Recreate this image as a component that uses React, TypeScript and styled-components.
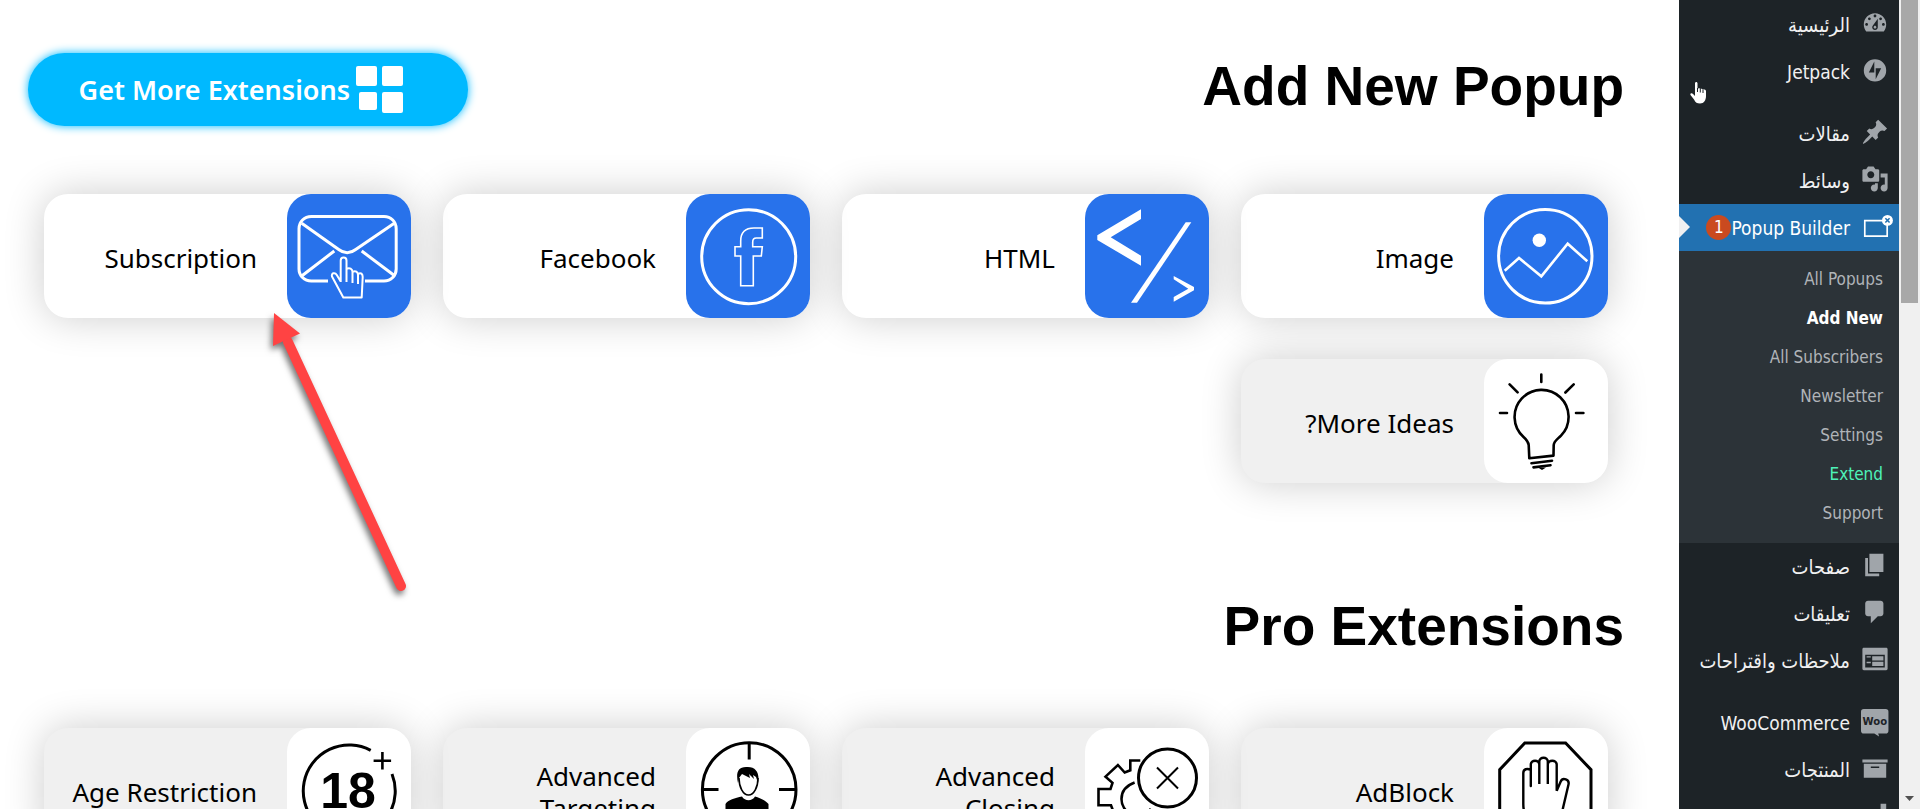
import React from 'react';
import styled, { createGlobalStyle, css } from 'styled-components';

const GlobalStyle = createGlobalStyle`
  *, *::before, *::after { box-sizing: border-box; }
  html, body { margin: 0; padding: 0; background: #fff; }
  ul { list-style: none; margin: 0; padding: 0; }
  a { text-decoration: none; color: inherit; }
`;

const Shell = styled.div`
  position: relative;
  display: flex;
  height: 100vh;
  overflow: hidden;
  background: #fff;
  color: #000;
`;

/* ---------- scroll rail ---------- */

const Rail = styled.div`
  position: relative;
  flex: 0 0 21px;
  padding: 0 2px;
  background: #f0f0f0;
`;

const Thumb = styled.div`
  height: 303px;
  background: #a8a8a8;
`;

const RailArrow = styled.svg`
  position: absolute;
  bottom: 8px;
  left: 6px;
  width: 9px;
  height: 5px;
  fill: #505050;
`;

/* ---------- admin menu ---------- */

const Sidebar = styled.nav`
  flex: 0 0 220px;
  padding-top: 1px;
  overflow: hidden;
  background: #1d2327;
  color: #f0f0f1;
  font-family: 'DejaVu Sans Condensed', 'Noto Sans', sans-serif;
  font-size: 19px;
`;

const MenuItem = styled.li<{ $spaced?: boolean }>`
  margin-top: ${(p) => (p.$spaced ? 15 : 0)}px;
`;

const MenuLink = styled.a<{ $current?: boolean }>`
  position: relative;
  display: flex;
  align-items: center;
  height: 47px;
  line-height: 26px;
  white-space: nowrap;
  &:lang(ar) {
    font-size: 20px;
  }
  ${(p) =>
    p.$current &&
    css`
      background: #2271b1;
      color: #fff;
      &::after {
        content: '';
        position: absolute;
        left: 0;
        top: 12px;
        border: 11px solid transparent;
        border-right-width: 0;
        border-left-color: #f0f0f1;
      }
    `}
`;

const MenuIcon = styled.svg`
  flex: none;
  align-self: flex-start;
  width: 28px;
  height: 28px;
  margin: 8px 10px 0 11px;
  fill: #a0a5aa;
  overflow: visible;
`;

const Badge = styled.span`
  width: 25px;
  height: 25px;
  border-radius: 50%;
  background: #ca4a1f;
  color: #fff;
  font-size: 17px;
  line-height: 25px;
  text-align: center;
`;

const SubMenu = styled.ul`
  padding: 9px 0 10px;
  background: #2c3338;
  font-size: 17px;
`;

const SubLink = styled.a<{ $tone?: 'current' | 'extend' }>`
  display: block;
  height: 39px;
  padding: 0 16px;
  line-height: 38px;
  color: ${(p) => (p.$tone === 'current' ? '#fff' : p.$tone === 'extend' ? '#4ef2b8' : '#b0b4b8')};
  font-weight: ${(p) => (p.$tone === 'current' ? 700 : 400)};
`;

/* ---------- content ---------- */

const Content = styled.main`
  flex: 1;
  min-width: 0;
  padding-top: 53px;
`;

const Header = styled.header`
  display: flex;
  justify-content: space-between;
  align-items: flex-start;
  padding: 0 55px 0 28px;
  margin-bottom: 68px;
`;

const Title = styled.h2`
  margin: 0;
  font: 700 55px/66px 'Liberation Sans', Arial, sans-serif;
`;

const SectionTitle = styled(Title)`
  margin: 110px 55px 69px 0;
`;

const ExtensionsButton = styled.button`
  display: flex;
  align-items: center;
  gap: 6px;
  width: 440px;
  height: 73px;
  padding: 0 65px 0 0;
  border: 0;
  border-radius: 37px;
  background: #00b9ff;
  box-shadow: 0 0 10px #00b9ff;
  color: #fff;
  font: 600 27px/40px 'Noto Sans', sans-serif;
  white-space: nowrap;
  svg {
    flex: none;
    width: 47px;
    height: 47px;
    fill: #fff;
  }
`;

const Grid = styled.div`
  display: grid;
  grid-template-columns: repeat(4, 1fr);
  gap: 41px 32px;
  padding: 0 71px 0 44px;
`;

const Card = styled.a<{ $muted?: boolean }>`
  display: flex;
  align-items: center;
  height: 124px;
  border-radius: 24px;
  background: ${(p) => (p.$muted ? '#f0f0f0' : '#fff')};
  box-shadow: 0 0 40px rgba(0, 0, 0, 0.2);
`;

const Tile = styled.svg<{ $muted?: boolean }>`
  flex: none;
  width: 124px;
  height: 124px;
  border-radius: 24px;
  background: ${(p) => (p.$muted ? '#fff' : '#2872eb')};
  color: ${(p) => (p.$muted ? '#000' : '#fff')};
  fill: none;
  stroke: currentColor;
  stroke-width: 3;
`;

const CardLabel = styled.span`
  flex: 1;
  padding: 3px 30px 0 24px;
  font: 400 26px/32px 'Noto Sans', sans-serif;
`;

/* ---------- overlays ---------- */

const Pointer = styled.svg`
  position: absolute;
  left: 264px;
  top: 304px;
  width: 150px;
  height: 300px;
  overflow: visible;
  filter: drop-shadow(-2px 4px 3px rgba(0, 0, 0, 0.55));
`;

const HandCursor = styled.svg`
  position: absolute;
  right: 213px;
  top: 82px;
  width: 17px;
  height: 22px;
`;

/* ---------- drawings ---------- */

const tiles: Record<string, React.ReactNode> = {
  image: (
    <>
      <circle cx="61.3" cy="62.3" r="46.7" />
      <circle cx="55.3" cy="46.3" r="6.7" fill="currentColor" stroke="none" />
      <path d="M20.7 76.7 35 64l22.3 18.3 26.4-32.6 19.6 17.6" strokeWidth="2.6" />
    </>
  ),
  html: (
    <g fill="currentColor" stroke="none">
      <path d="M56 15.3V25L25.7 43.3 56 61.7v10L12.3 46v-4.7z" />
      <path d="M100.7 28.3h5.6L52 108.7h-6z" />
      <path d="M88.7 82 109 93v3.3l-20.3 11.4V103l14.6-8.3-14.6-9.4z" />
    </g>
  ),
  facebook: (
    <>
      <circle cx="62.7" cy="62.7" r="47" />
      <path
        strokeWidth="1.6"
        d="M76.3 34H68c-9 0-13.3 5-13.3 13v5.7H49V62h5.7v29.7h12.6V62h8l1-9.3h-9.6V48c0-3 1-4 3.6-4h6z"
      />
    </>
  ),
  subscription: (
    <>
      <path d="M41 87H24.3c-7 0-12.3-5.3-12.3-12V34.700c0-7 5.300-12.200 12.300-12.200H97c7 0 12.200 5.200 12.200 12.200V75c0 6.700-5.200 12-12.200 12H78" />
      <path d="m14.7 29.300 37 26.200c6 4.600 11 4.600 17 0l38.600-26.200M14.700 82l32.600-25M74.700 57l32.600 24.500" />
      <path
        strokeWidth="2"
        strokeLinejoin="round"
        d="M53.700 88V66.500c0-4 5.800-4 5.800 0V88M59.500 75c3-2 6 0 6 3v11M65.500 78c3-2 5.500 0 5.500 3v9M71 80c3-2 4.700 0 4.700 3l-1 20.400H56.300L45 82.500c-1-3.500 3-4.500 4.800-1.500l3.900 6.500"
      />
    </>
  ),
  bulb: (
    <>
      <path
        strokeLinejoin="round"
        strokeWidth="2.600"
        d="M45.300 99.300 44.700 86c-.3-3.500-2.500-5.700-5.400-8.300A27 27 0 1 1 77 76.600c-4 4-7 5.600-7.300 9.400l-.2 10.600z"
      />
      <path
        strokeLinecap="round"
        strokeWidth="2.600"
        d="m47.500 104.300 20.500-2.600M49.500 108.400l17-2.200M57.300 15.500v7.500M25.600 25.300l8 8M89.700 25.300l-8.300 8.200M16 54h7M92 54h7.400"
      />
      <path d="M54 108.500h8l-4 2.500z" fill="currentColor" stroke="none" />
    </>
  ),
  adblock: (
    <>
      <path d="M40.800 15h40.800L107 41.700v41l-25.400 26H40.800L15.700 82.700v-41z" />
      <path
        strokeWidth="2.400"
        strokeLinecap="round"
        d="M46.800 58V36.500c0-5 8.500-5 8.500 0V56V33.500c0-5 8.500-5 8.500 0V56V36.500c0-5 8.900-5 8.900 0v26.300l4-9.300c2-4.500 9-2 7.800 3L79 80c-2 11-9 16-19 16-14 0-20.700-7-20.700-20V45c0-4 4-5 7.500-3"
      />
    </>
  ),
  closing: (
    <g transform="translate(2 0)">
      <circle cx="80.500" cy="50" r="29" />
      <path d="m70 39.500 21 21M91 39.500l-21 21" strokeWidth="2" />
      <path
        strokeWidth="2.600"
        d="M53.300 32.500h-10v9.800L37.700 44.500l-6.800-7.500-12.400 11.600 7 6.200-2 6.200h-12v16.300H24l3 8-8 8 12 12 8-7"
      />
      <path strokeWidth="2.600" d="M47.600 54.500C38 58 34.500 64 34.500 71c0 5 2 9 5 12M62 81l4 3" />
    </g>
  ),
  targeting: (
    <g transform="translate(1 0)">
      <circle cx="62.200" cy="61.500" r="46.800" />
      <path d="M62.200 15v16.500M14 61.500h17.500M92 61.500h17.500" />
      <path d="M52 50c0 9 4 17 9.500 17S71 59 71 50" strokeWidth="1.600" />
      <path
        fill="currentColor"
        stroke="none"
        d="M51 55c-2-9-1-16 8-16 10-1 14 6 12 16l-2-6-3-2 1 4-5-5 1 4-8-4-3 4zM55 68.500c3 5 10 5 13 0 6 2 11 4 13.500 7.500V100h-43V76c2.500-4 9.500-6 16.500-7.500z"
      />
    </g>
  ),
  age: (
    <>
      <path d="M83.700 22.300A46 46 0 1 0 105 46" />
      <path d="M95.400 24v17.500M86.600 32.700h17.500" strokeWidth="2.600" />
      <text
        x="61"
        y="80"
        textAnchor="middle"
        fill="currentColor"
        stroke="none"
        fontFamily="'Liberation Sans', sans-serif"
        fontWeight="700"
        fontSize="50"
        direction="ltr"
      >
        18
      </text>
    </>
  ),
};

const glyphs: Record<string, React.ReactNode> = {
  dashboard: (
    <path
      fillRule="evenodd"
      d="M3.760 16h12.480c1.100-1.370 1.760-3.110 1.760-5 0-4.420-3.580-8-8-8s-8 3.580-8 8c0 1.890.66 3.630 1.760 5zM10 4c.55 0 1 .45 1 1s-.45 1-1 1-1-.45-1-1 .45-1 1-1zM6 6c.55 0 1 .45 1 1s-.45 1-1 1-1-.45-1-1 .45-1 1-1zm8 0c.55 0 1 .45 1 1s-.45 1-1 1-1-.45-1-1 .45-1 1-1zm-5.370 5.550L12 7v6c0 1.100-.9 2-2 2s-2-.9-2-2c0-.57.240-1.080.630-1.450zM4 10c.55 0 1 .45 1 1s-.45 1-1 1-1-.45-1-1 .45-1 1-1zm12 0c.55 0 1 .45 1 1s-.45 1-1 1-1-.45-1-1 .45-1 1-1zM10 12c.5 0 1 .5 1 1s-.5 1-1 1-1-.5-1-1 .5-1 1-1z"
    />
  ),
  jetpack: (
    <path
      fillRule="evenodd"
      d="M10 2.300a8 8 0 1 0 0 16 8 8 0 0 0 0-16zM9.500 11.800H5.600L9.500 4zM10.500 16.600V8.800h3.900z"
    />
  ),
  pin: (
    <path d="M10.440 3.020l1.820-1.820 6.360 6.350-1.830 1.820c-1.050-.68-2.480-.57-3.410.36l-.75.75c-.92.93-1.040 2.350-.35 3.410l-1.830 1.820-2.410-2.410-2.800 2.790c-.42.42-3.380 2.710-3.800 2.290s1.860-3.390 2.280-3.810l2.790-2.790L4.100 9.360l1.830-1.820c1.050.69 2.480.57 3.400-.36l.75-.75c.93-.92 1.050-2.350.36-3.410z" />
  ),
  media: (
    <path d="M13 11V4c0-.55-.45-1-1-1h-1.670L9 1H5L3.670 3H2c-.55 0-1 .45-1 1v7c0 .55.45 1 1 1h10c.55 0 1-.45 1-1zM7 4.500c1.380 0 2.500 1.120 2.500 2.500S8.380 9.500 7 9.500 4.500 8.380 4.500 7 5.620 4.500 7 4.500zM14 6h5v10.500c0 1.380-1.120 2.500-2.500 2.500S14 17.880 14 16.500s1.120-2.500 2.500-2.500c.17 0 .34.020.5.050V9h-3V6zm-4 8.050V13h2v3.500c0 1.380-1.120 2.500-2.500 2.500S7 17.880 7 16.500 8.120 14 9.500 14c.17 0 .34.020.5.050z" />
  ),
  popup: (
    <>
      <path d="M2.700 6.200h16v11h-16z" fill="none" stroke="#fff" strokeWidth="1.200" />
      <circle cx="18.900" cy="6" r="3.900" fill="#fff" />
      <path d="m17.400 4.500 3 3M20.400 4.500l-3 3" stroke="#2271b1" strokeWidth="1.100" />
    </>
  ),
  pages: <path d="M6 15V2h10v13H6zm-1 1h8v2H3V5h2v11z" />,
  comments: (
    <path d="M5 2h9c1.100 0 2 .9 2 2v7c0 1.100-.9 2-2 2h-2l-5 5v-5H5c-1.100 0-2-.9-2-2V4c0-1.100.9-2 2-2z" />
  ),
  feedback: (
    <path
      fillRule="evenodd"
      d="M2 2h16c.55 0 1 .45 1 1v14c0 .55-.45 1-1 1H2c-.55 0-1-.45-1-1V3c0-.55.45-1 1-1zm15 14V7H3v9h14zM4 8v1h3V8H4zm4 0v3h8V8H8zm-4 4v1h3v-1H4zm4 0v3h8v-3H8z"
    />
  ),
  woo: (
    <>
      <path d="M2 1.400h15.600a2 2 0 0 1 2 2v13.500a2 2 0 0 1-2 2h-5.300l.6 2.100-3.400-2.100H2a2 2 0 0 1-2-2V3.400a2 2 0 0 1 2-2z" />
      <text
        x="9.900"
        y="13.200"
        textAnchor="middle"
        direction="ltr"
        fill="#1d2327"
        fontFamily="'DejaVu Sans Condensed', sans-serif"
        fontWeight="700"
        fontSize="8"
      >
        Woo
      </text>
    </>
  ),
  archive: <path fillRule="evenodd" d="M19 4v2H1V4h18zM2 7h16v10H2V7zm11 3V9H7v1h6z" />,
  chart: <path d="M18 18V2h-4v16h4zm-6 0V7H8v11h4zm-6 0v-8H2v8h4z" />,
};

interface Entry {
  label: string;
  icon: string;
  lang?: string;
  spaced?: boolean;
  current?: boolean;
}

const menu: Entry[] = [
  { label: 'الرئيسية', icon: 'dashboard', lang: 'ar' },
  { label: 'Jetpack', icon: 'jetpack' },
  { label: 'مقالات', icon: 'pin', lang: 'ar', spaced: true },
  { label: 'وسائط', icon: 'media', lang: 'ar' },
  { label: 'Popup Builder', icon: 'popup', current: true },
  { label: 'صفحات', icon: 'pages', lang: 'ar' },
  { label: 'تعليقات', icon: 'comments', lang: 'ar' },
  { label: 'ملاحظات واقتراحات', icon: 'feedback', lang: 'ar' },
  { label: 'WooCommerce', icon: 'woo', spaced: true },
  { label: 'المنتجات', icon: 'archive', lang: 'ar' },
  { label: '', icon: 'chart' },
];

const submenu: { label: string; tone?: 'current' | 'extend' }[] = [
  { label: 'All Popups' },
  { label: 'Add New', tone: 'current' },
  { label: 'All Subscribers' },
  { label: 'Newsletter' },
  { label: 'Settings' },
  { label: 'Extend', tone: 'extend' },
  { label: 'Support' },
];

interface PopupType {
  label: string;
  icon: string;
  muted?: boolean;
}

const popupTypes: PopupType[] = [
  { label: 'Image', icon: 'image' },
  { label: 'HTML', icon: 'html' },
  { label: 'Facebook', icon: 'facebook' },
  { label: 'Subscription', icon: 'subscription' },
  { label: 'More Ideas?', icon: 'bulb', muted: true },
];

const proTypes: PopupType[] = [
  { label: 'AdBlock', icon: 'adblock', muted: true },
  { label: 'Advanced Closing', icon: 'closing', muted: true },
  { label: 'Advanced Targeting', icon: 'targeting', muted: true },
  { label: 'Age Restriction', icon: 'age', muted: true },
];

const CardGrid = ({ items }: { items: PopupType[] }) => (
  <Grid>
    {items.map((item) => (
      <Card key={item.label} href="#" $muted={item.muted}>
        <Tile viewBox="0 0 124 124" $muted={item.muted} aria-hidden="true">
          {tiles[item.icon]}
        </Tile>
        <CardLabel>{item.label}</CardLabel>
      </Card>
    ))}
  </Grid>
);

export default function App() {
  return (
    <>
      <GlobalStyle />
      <Shell dir="rtl">
        <Rail aria-hidden="true">
          <Thumb />
          <RailArrow viewBox="0 0 9 5">
            <path d="M0 0h9L4.500 5z" />
          </RailArrow>
        </Rail>

        <Sidebar>
          <ul>
            {menu.map((entry) => (
              <MenuItem key={entry.icon} $spaced={entry.spaced}>
                <MenuLink href="#" lang={entry.lang} $current={entry.current}>
                  <MenuIcon viewBox="0 0 20 20" aria-hidden="true">
                    {glyphs[entry.icon]}
                  </MenuIcon>
                  <span>{entry.label}</span>
                  {entry.current && <Badge>1</Badge>}
                </MenuLink>
                {entry.current && (
                  <SubMenu>
                    {submenu.map((sub) => (
                      <li key={sub.label}>
                        <SubLink href="#" $tone={sub.tone}>
                          {sub.label}
                        </SubLink>
                      </li>
                    ))}
                  </SubMenu>
                )}
              </MenuItem>
            ))}
          </ul>
        </Sidebar>

        <Content>
          <Header>
            <Title>Add New Popup</Title>
            <ExtensionsButton type="button">
              <svg viewBox="0 0 47 47" aria-hidden="true">
                <rect x="0" y="0" width="21" height="20" rx="2" />
                <rect x="26" y="0" width="21" height="20" rx="2" />
                <rect x="3" y="26" width="18" height="18" rx="2" />
                <rect x="26" y="26" width="21" height="21" rx="2" />
              </svg>
              Get More Extensions
            </ExtensionsButton>
          </Header>
          <CardGrid items={popupTypes} />
          <SectionTitle>Pro Extensions</SectionTitle>
          <CardGrid items={proTypes} />
        </Content>

        <Pointer viewBox="0 0 150 300" aria-hidden="true">
          <path d="M24 38 137 282" stroke="#ff4343" strokeWidth="10" strokeLinecap="round" />
          <path d="M10 9 36 29.500 9 42z" fill="#ff4343" />
        </Pointer>
        <HandCursor viewBox="0 0 17 22" aria-hidden="true">
          <path
            fill="#fff"
            d="M5 1.500c0-2 2.500-2 2.500 0V7c.5-1 2.500-1 2.700.3.700-.8 2.300-.6 2.500.6 1-.7 3-.3 3.300 1.100V14c0 4-2 7.500-6 7.500-3 0-4.500-1-6-4L.5 13c-.7-1.500 1-2.500 2.300-1.200L5 14z"
          />
          <path d="M7.500 6v4M10.300 7v3.500M13 8v3" stroke="#1d2327" strokeWidth="1" />
        </HandCursor>
      </Shell>
    </>
  );
}
